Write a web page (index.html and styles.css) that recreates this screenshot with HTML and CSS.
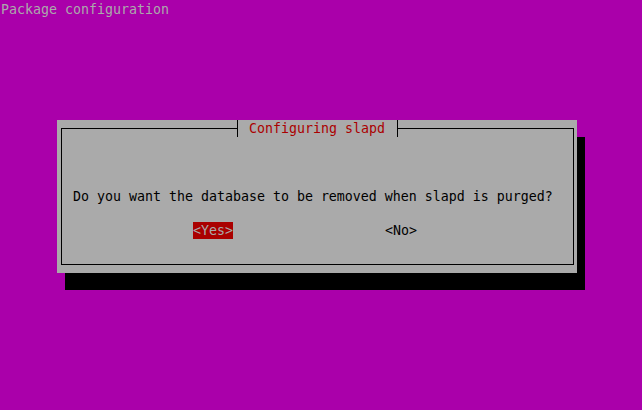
FILE: index.html
```html
<!DOCTYPE html>
<html>
<head>
<meta charset="utf-8">
<link rel="stylesheet" href="styles.css">
</head>
<body>
<div class="screen">
  <div class="header">Package configuration</div>
  <div class="shadow"></div>
  <div class="dialog">
    <div class="frame">
      <div class="title">Configuring slapd</div>
      <div class="question">Do you want the database to be removed when slapd is purged?</div>
      <div class="buttons">
        <span class="btn btn-active">&lt;Yes&gt;</span>
        <span class="btn">&lt;No&gt;</span>
      </div>
    </div>
  </div>
</div>
</body>
</html>
```
FILE: styles.css
```css
html, body {
  margin: 0;
  padding: 0;
  background: #aa00aa;
  width: 642px;
  height: 410px;
  overflow: hidden;
}
.screen {
  display: grid;
  grid-template-columns: repeat(80, 8px);
  grid-template-rows: repeat(24, 17px);
  padding: 1px 0 0 1px;
  font-family: "DejaVu Sans Mono", "Liberation Mono", monospace;
  font-size: 13.29px;
  line-height: 17px;
  white-space: pre;
}
.header {
  grid-row: 1;
  grid-column: 1 / span 80;
  color: #aaaaaa;
}
.shadow {
  grid-row: 9 / 18;
  grid-column: 9 / 74;
  background: #000;
}
.dialog {
  grid-row: 8 / 17;
  grid-column: 8 / 73;
  background: #aaaaaa;
  padding: 8px 3px 8px 4px;
  display: flex;
  flex-direction: column;
  color: #000;
}
.frame {
  flex: 1;
  border: 1px solid #000;
  display: flex;
  flex-direction: column;
  align-items: flex-start;
}
.title {
  box-sizing: border-box;
  margin-top: -9px;
  margin-left: 175px;
  width: 161px;
  height: 17px;
  padding: 0 12px 0 11px;
  background: #aaaaaa;
  border-left: 1px solid #000;
  border-right: 1px solid #000;
  color: #aa0000;
}
.question {
  margin-top: 51px;
  margin-left: 11px;
  height: 17px;
}
.buttons {
  margin-top: 17px;
  margin-left: 131px;
  display: flex;
  gap: 152px;
  height: 17px;
}
.btn-active {
  background: #aa0000;
  color: #aaaaaa;
}
```
